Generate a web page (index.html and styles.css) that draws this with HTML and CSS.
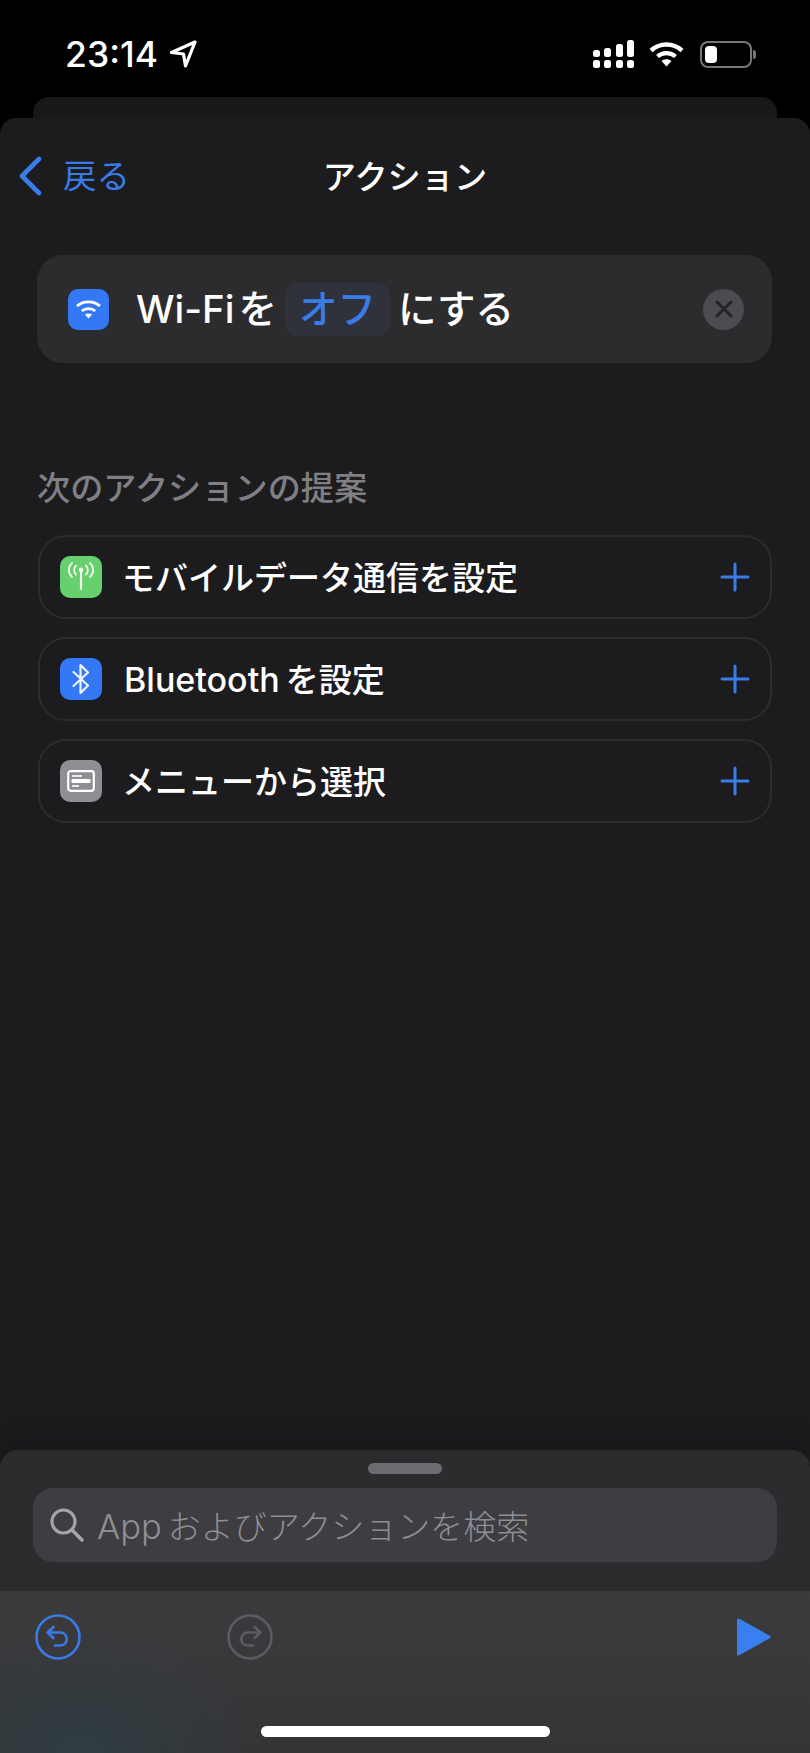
FILE: index.html
```html
<!DOCTYPE html>
<html lang="ja">
  <head>
    <meta charset="UTF-8" />
    <meta name="viewport" content="width=device-width, initial-scale=1.0" />
    <title>アクション</title>
    <link rel="stylesheet" href="styles.css">
  </head>
  <body>
    <div class="screen">
      <div class="statusBar">
        <div class="statusLeft">
          <span class="time">23:14</span>
          <svg class="locationIcon" width="28" height="28" viewBox="0 0 28 28">
            <path d="M26 2 L2.5 12.5 L14.5 14 L16.5 26 Z" fill="none" stroke="#fff" stroke-width="3.2" stroke-linejoin="round" />
          </svg>
        </div>
        <div class="statusRight">
          <svg width="41" height="28" viewBox="0 0 41 28" fill="#fff">
            <rect x="0" y="10" width="7" height="7" rx="2.5" />
            <rect x="11" y="8" width="7" height="9" rx="2.5" />
            <rect x="23" y="4" width="7" height="13" rx="2.5" />
            <rect x="34" y="0" width="7" height="17" rx="2.5" />
            <rect x="0" y="20" width="7" height="8" rx="2.5" />
            <rect x="11" y="20" width="7" height="8" rx="2.5" />
            <rect x="23" y="20" width="7" height="8" rx="2.5" />
            <rect x="34" y="20" width="7" height="8" rx="2.5" />
          </svg>
          <svg class="wifiIcon" width="35" height="26" viewBox="0 0 35 26">
            <path d="M2 9.5 C11 1.5 24 1.5 33 9.5" fill="none" stroke="#fff" stroke-width="4.4" />
            <path d="M8.5 15.5 C13.5 11 21.500 11 26.500 15.500" fill="none" stroke="#fff" stroke-width="4.2" />
            <path d="M12.500 20 C15.500 17.500 19.500 17.500 22.500 20 L17.500 25.500 Z" fill="#fff" />
          </svg>
          <div class="battery">
            <div class="batteryBody"><div class="batteryLevel"></div></div>
            <div class="batteryNub"></div>
          </div>
        </div>
      </div>

      <div class="backSheet"></div>

      <div class="sheet">
        <div class="navBar">
          <div class="backLink">
            <svg width="24" height="40" viewBox="0 0 24 40">
              <path d="M21 3 L4 20 L21 37" fill="none" stroke="#3a7bea" stroke-width="4.6" stroke-linecap="round" stroke-linejoin="round" />
            </svg>
            <span class="backText">戻る</span>
          </div>
          <div class="navTitle">アクション</div>
        </div>

        <div class="actionCard">
          <div class="appIcon appIconBig blue">
            <svg width="27" height="22" viewBox="0 0 27 22">
              <path d="M2 8 C8.500 2.500 18.500 2.500 25 8" fill="none" stroke="#fff" stroke-width="2.800" />
              <path d="M6.800 13 C10.500 9.800 16.500 9.800 20.200 13" fill="none" stroke="#fff" stroke-width="2.800" />
              <path d="M10 16.500 C12 15 15 15 17 16.500 L13.500 20.500 Z" fill="#fff" />
            </svg>
          </div>
          <div class="actionText">
            <span>Wi-Fi<span class="jaGap">を</span></span>
            <span class="pill">オフ</span>
            <span>にする</span>
          </div>
          <div class="closeButton">
            <svg width="20" height="20" viewBox="0 0 20 20">
              <path d="M3 3 L17 17 M17 3 L3 17" stroke="#232326" stroke-width="2.800" stroke-linecap="round" />
            </svg>
          </div>
        </div>

        <h2 class="sectionLabel">次のアクションの提案</h2>

        <div class="suggestions">
          <div class="row">
            <div class="appIcon green">
              <svg width="30" height="32" viewBox="0 0 30 32" fill="none" stroke="#eefbe9" stroke-width="1.800" stroke-linecap="round">
                <path d="M15 10 V28" stroke-width="2.200" />
                <circle cx="15" cy="9" r="2.400" fill="#eefbe9" stroke="none" />
                <path d="M10 4.500 C7.500 7 7.500 11 10 13.500 M20 4.500 C22.500 7 22.500 11 20 13.500" />
                <path d="M6 2 C1.800 6 1.800 12 6 16 M24 2 C28.200 6 28.200 12 24 16" />
              </svg>
            </div>
            <span class="rowText">モバイルデータ通信を設定</span>
            <svg class="plusIcon" width="30" height="30" viewBox="0 0 30 30">
              <path d="M15 2 V28 M2 15 H28" stroke="#3a7bea" stroke-width="3" stroke-linecap="round" />
            </svg>
          </div>
          <div class="row">
            <div class="appIcon blue">
              <svg width="20" height="32" viewBox="0 0 20 32">
                <path d="M2.500 9 L17 22.500 L9.500 30 V2 L17 9.500 L2.500 23" fill="none" stroke="#eef4ff" stroke-width="2.200" stroke-linecap="round" stroke-linejoin="round" />
              </svg>
            </div>
            <span class="rowText"><span class="latin">Bluetooth</span><span class="latinGap">を設定</span></span>
            <svg class="plusIcon" width="30" height="30" viewBox="0 0 30 30">
              <path d="M15 2 V28 M2 15 H28" stroke="#3a7bea" stroke-width="3" stroke-linecap="round" />
            </svg>
          </div>
          <div class="row">
            <div class="appIcon gray">
              <svg width="28" height="22" viewBox="0 0 28 22" fill="none" stroke="#fff">
                <rect x="1.200" y="1.200" width="25.600" height="19.600" rx="2.500" stroke-width="2.200" />
                <path d="M5 6 H15" stroke-width="1.600" />
                <rect x="4.500" y="9" width="19" height="4" rx="1" fill="#fff" stroke="none" />
                <path d="M5 16 H12" stroke-width="1.600" />
              </svg>
            </div>
            <span class="rowText">メニューから選択</span>
            <svg class="plusIcon" width="30" height="30" viewBox="0 0 30 30">
              <path d="M15 2 V28 M2 15 H28" stroke="#3a7bea" stroke-width="3" stroke-linecap="round" />
            </svg>
          </div>
        </div>

        <div class="searchPanel">
          <div class="grabber"></div>
          <div class="searchBox">
            <svg width="36" height="36" viewBox="0 0 36 36" fill="none" stroke="#a5a5a9" stroke-width="3.200" stroke-linecap="round">
              <circle cx="14.500" cy="14.500" r="11.500" />
              <path d="M23 23 L33 33" stroke-width="3.600" />
            </svg>
            <span class="searchText"><span class="searchLatin">App</span><span class="latinGap">およびアクションを検索</span></span>
          </div>
        </div>

        <div class="toolbar">
          <svg class="undoIcon" width="46" height="46" viewBox="0 0 46 46" fill="none" stroke="#3a7bea" stroke-width="2.600" stroke-linecap="round" stroke-linejoin="round">
            <circle cx="23" cy="23" r="21.500" />
            <path d="M18.500 13 L12.500 18.500 L18.500 24" />
            <path d="M13 18.500 H25 C34 18.500 34 31.500 25 31.500 H20" />
          </svg>
          <svg class="redoIcon" width="46" height="46" viewBox="0 0 46 46" fill="none" stroke="#5c5c60" stroke-width="2.600" stroke-linecap="round" stroke-linejoin="round">
            <circle cx="23" cy="23" r="21.500" />
            <path d="M27.500 13 L33.500 18.500 L27.500 24" />
            <path d="M33 18.500 H21 C12 18.500 12 31.500 21 31.500 H26" />
          </svg>
          <svg class="playIcon" width="36" height="40" viewBox="0 0 36 40">
            <path d="M2.500 3 L33 20 L2.500 37 Z" fill="#3a7fef" stroke="#3a7fef" stroke-width="3" stroke-linejoin="round" />
          </svg>
          <div class="homeIndicator"></div>
        </div>
      </div>
    </div>
  </body>
</html>
```

FILE: styles.css
```css
* {
  box-sizing: border-box;
}

html,
body {
  margin: 0;
  padding: 0;
  background-color: #000;
}

body {
  font-family: Inter, "Noto Sans CJK JP", sans-serif;
  color: #fff;
}

.screen {
  width: 810px;
  height: 1753px;
  display: flex;
  flex-direction: column;
  overflow: hidden;
}

/* status bar */
.statusBar {
  height: 97px;
  flex: none;
  display: flex;
  justify-content: space-between;
  align-items: flex-start;
  padding: 40px 54px 0 65px;
}

.statusLeft {
  display: flex;
  align-items: center;
  gap: 11px;
}

.time {
  font-size: 35.5px;
  line-height: 27px;
  font-weight: 500;
}

.statusRight {
  display: flex;
  align-items: center;
}

.wifiIcon {
  margin-left: 15px;
}

.battery {
  margin-left: 16px;
  display: flex;
  align-items: center;
}

.batteryBody {
  width: 52px;
  height: 27px;
  border: 2px solid #77777a;
  border-radius: 8px;
  padding: 3px;
}

.batteryLevel {
  width: 12px;
  height: 100%;
  background-color: #fff;
  border-radius: 4px;
}

.batteryNub {
  width: 3px;
  height: 9px;
  margin-left: 1px;
  background-color: #77777a;
  border-radius: 0 3px 3px 0;
}

/* sheets */
.backSheet {
  height: 21px;
  flex: none;
  margin: 0 33px;
  background-color: #18181a;
  border-radius: 16px 16px 0 0;
}

.sheet {
  flex: 1;
  display: flex;
  flex-direction: column;
  background-color: #1c1c1e;
  border-radius: 16px 16px 0 0;
}

.navBar {
  height: 116px;
  flex: none;
  display: flex;
  align-items: center;
  justify-content: center;
  padding-bottom: 4px;
  position: relative;
}

.backLink {
  position: absolute;
  left: 18px;
  top: 38px;
  display: flex;
  align-items: center;
  gap: 21px;
}

.backText {
  font-size: 33.5px;
  line-height: 40px;
  color: #3a7bea;
}

.navTitle {
  font-size: 33.2px;
  font-weight: 500;
}

/* selected action */
.actionCard {
  height: 108px;
  flex: none;
  margin: 21px 38px 0 37px;
  padding: 0 28px 0 31px;
  display: flex;
  align-items: center;
  background-color: #2c2c2e;
  border-radius: 26px;
}

.appIcon {
  width: 42px;
  height: 42px;
  flex: none;
  display: flex;
  align-items: center;
  justify-content: center;
  border-radius: 10px;
}

.appIconBig {
  width: 41px;
  height: 41px;
}

.blue {
  background-color: #3478f6;
}

.green {
  background-color: #66cf6e;
}

.gray {
  background-color: #8e8e93;
}

.actionText {
  flex: 1;
  margin-left: 27px;
  padding-bottom: 6px;
  display: flex;
  align-items: center;
  font-size: 38.5px;
  font-weight: 500;
  gap: 8px;
}

.jaGap {
  margin-left: 4px;
}

.latinGap {
  margin-left: 6px;
}

.pill {
  width: 105px;
  height: 53px;
  margin-top: 6px;
  padding-bottom: 6px;
  display: flex;
  align-items: center;
  justify-content: center;
  background-color: #2f323a;
  border-radius: 12px;
  color: #3a7bea;
}

.closeButton {
  width: 41px;
  height: 41px;
  display: flex;
  align-items: center;
  justify-content: center;
  background-color: #4b4b50;
  border-radius: 50%;
}

/* suggestions */
.sectionLabel {
  margin: 106px 0 0 37px;
  font-size: 33.2px;
  line-height: 38px;
  font-weight: 500;
  color: #7f7f84;
}

.suggestions {
  margin: 28px 38px 0 38px;
  display: flex;
  flex-direction: column;
  gap: 18px;
}

.row {
  height: 84px;
  display: flex;
  align-items: center;
  padding: 0 20px 0 20px;
  border: 2px solid #2c2c2e;
  border-radius: 28px;
}

.rowText {
  flex: 1;
  margin-left: 20px;
  padding-bottom: 2px;
  font-size: 33px;
  font-weight: 500;
}

.latin {
  margin-left: 2px;
  font-size: 34px;
}

/* bottom search panel */
.searchPanel {
  height: 141px;
  flex: none;
  margin-top: auto;
  padding: 13px 33px 0;
  background-color: #2c2c2e;
  border-radius: 18px 18px 0 0;
  box-shadow: 0 -14px 20px rgba(18, 18, 24, 0.35);
}

.grabber {
  width: 74px;
  height: 11px;
  margin: 0 auto 14px;
  background-color: #6b6b70;
  border-radius: 6px;
}

.searchBox {
  height: 74px;
  display: flex;
  align-items: center;
  padding: 0 0 0 16px;
  background-color: #3d3d42;
  border-radius: 20px;
}

.searchText {
  margin-left: 12px;
  font-size: 33px;
  font-weight: 300;
  color: #8e8e93;
}

.searchLatin {
  font-size: 34.5px;
}

.toolbar {
  height: 162px;
  flex: none;
  position: relative;
  background:
    radial-gradient(ellipse 170px 120px at 80px 162px, #2f3d42 0%, rgba(47, 61, 66, 0) 100%),
    linear-gradient(180deg, #3b3b3e 0%, #39393c 40%, #343436 100%);
}

.undoIcon {
  position: absolute;
  left: 35px;
  top: 23px;
}

.redoIcon {
  position: absolute;
  left: 227px;
  top: 23px;
}

.playIcon {
  position: absolute;
  left: 736px;
  top: 26px;
}

.homeIndicator {
  position: absolute;
  left: 261px;
  top: 135px;
  width: 289px;
  height: 11px;
  background-color: #fff;
  border-radius: 6px;
}
```
